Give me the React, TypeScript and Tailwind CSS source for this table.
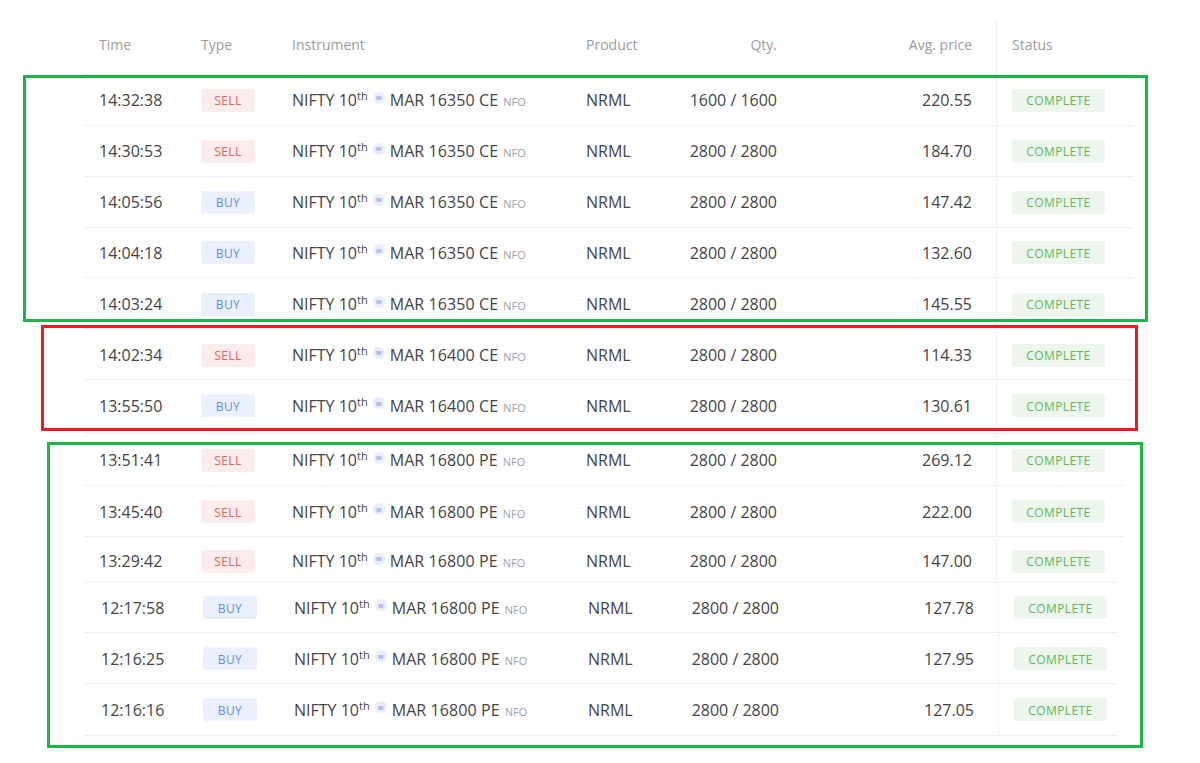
import React from "react";

type Side = "SELL" | "BUY";

interface Order {
  time: string;
  side: Side;
  strike: string;
  qty: string;
  price: string;
  h: string;
  shift?: boolean;
  pad?: string;
  line: string;
}

const orders: Order[] = [
  { time: "14:32:38", side: "SELL", strike: "16350 CE", qty: "1600 / 1600", price: "220.55", h: "h-[51px]", line: "w-[1049px]" },
  { time: "14:30:53", side: "SELL", strike: "16350 CE", qty: "2800 / 2800", price: "184.70", h: "h-[51px]", line: "w-[1049px]" },
  { time: "14:05:56", side: "BUY", strike: "16350 CE", qty: "2800 / 2800", price: "147.42", h: "h-[51px]", line: "w-[1049px]" },
  { time: "14:04:18", side: "BUY", strike: "16350 CE", qty: "2800 / 2800", price: "132.60", h: "h-[50px]", line: "w-[1049px]" },
  { time: "14:03:24", side: "BUY", strike: "16350 CE", qty: "2800 / 2800", price: "145.55", h: "h-[51px]", pad: "pt-[2px]", line: "w-[1049px]" },
  { time: "14:02:34", side: "SELL", strike: "16400 CE", qty: "2800 / 2800", price: "114.33", h: "h-[51px]", pad: "pt-[2px]", line: "w-[1049px]" },
  { time: "13:55:50", side: "BUY", strike: "16400 CE", qty: "2800 / 2800", price: "130.61", h: "h-[54px]", pad: "pb-[2px]", line: "w-[1040px]" },
  { time: "13:51:41", side: "SELL", strike: "16800 PE", qty: "2800 / 2800", price: "269.12", h: "h-[52px]", pad: "pt-[1px]", line: "w-[1040px]" },
  { time: "13:45:40", side: "SELL", strike: "16800 PE", qty: "2800 / 2800", price: "222.00", h: "h-[51px]", pad: "pt-[1px]", line: "w-[1040px]" },
  { time: "13:29:42", side: "SELL", strike: "16800 PE", qty: "2800 / 2800", price: "147.00", h: "h-[46px]", pad: "pt-[3px]", line: "w-[1033px]" },
  { time: "12:17:58", side: "BUY", strike: "16800 PE", qty: "2800 / 2800", price: "127.78", h: "h-[50px]", shift: true, line: "w-[1033px]" },
  { time: "12:16:25", side: "BUY", strike: "16800 PE", qty: "2800 / 2800", price: "127.95", h: "h-[51px]", pad: "pt-[1px]", shift: true, line: "w-[1033px]" },
  { time: "12:16:16", side: "BUY", strike: "16800 PE", qty: "2800 / 2800", price: "127.05", h: "h-[52px]", shift: true, line: "w-[1033px]" },
];

function SideBadge({ side }: { side: Side }) {
  const tone =
    side === "SELL"
      ? "bg-[#fdecec] text-[#e4605d]"
      : "bg-[#eaf0fe] text-[#5b8def]";
  return (
    <span
      className={`flex h-[23px] w-[54px] items-center justify-center rounded-[3px] pt-[2px] text-[12px] tracking-[0.4px] ${tone}`}
    >
      {side}
    </span>
  );
}

function Instrument({ strike }: { strike: string }) {
  return (
    <span className="flex items-baseline whitespace-nowrap">
      <span>NIFTY 10</span>
      <sup className="relative -top-[6px] text-[11px] leading-none">th</sup>
      <span className="mx-[5px] flex h-[12px] w-[12px] -translate-y-[6px] items-center justify-center rounded-full bg-[#e8edfb] text-[7px] leading-none text-[#6b8fe6]">
        w
      </span>
      <span className="tracking-[0.1px]">MAR {strike}</span>
      <span className="ml-[5px] text-[11px] text-[#a0a0a0]">NFO</span>
    </span>
  );
}

function Row({ o }: { o: Order }) {
  return (
    <div className={`flex flex-col ${o.h}`}>
      <div
        className={`flex flex-1 items-center ${o.shift ? "pl-[2px]" : ""} ${o.pad ?? ""}`}
      >
        <div className="w-[102px] pl-[15px]">{o.time}</div>
        <div className="w-[91px] pl-[15px]">
          <SideBadge side={o.side} />
        </div>
        <div className="w-[294px] pl-[15px]">
          <Instrument strike={o.strike} />
        </div>
        <div className="w-[102px] pl-[15px]">NRML</div>
        <div className="w-[119px] pr-[15px] text-right">{o.qty}</div>
        <div className="w-[204px] pr-[24px] text-right">{o.price}</div>
        <div className="flex h-full w-[137px] items-center border-l border-[#f0f0f0] pl-[15px]">
          <span className="flex h-[23px] w-[93px] items-center justify-center rounded-[3px] bg-[#ecf6ec] pt-[2px] text-[12px] tracking-[0.4px] text-[#5cb85c]">
            COMPLETE
          </span>
        </div>
      </div>
      <div className={`h-px bg-[#eeeeee] ${o.line}`} />
    </div>
  );
}

export default function App() {
  return (
    <div className="relative h-[763px] w-[1200px] overflow-hidden bg-white font-['Open_Sans',sans-serif] text-[16px] text-[#444444]">
      <div className="ml-[84px] pt-[20px]">
        <div className="flex h-[55px] w-[1049px] items-center border-b border-[#eeeeee] text-[14px] text-[#9b9b9b]">
          <div className="flex h-full w-[912px] items-center pb-[6px]">
            <div className="w-[102px] pl-[15px]">Time</div>
            <div className="w-[91px] pl-[15px]">Type</div>
            <div className="w-[294px] pl-[15px]">Instrument</div>
            <div className="w-[102px] pl-[15px]">Product</div>
            <div className="w-[119px] pr-[15px] text-right">Qty.</div>
            <div className="w-[204px] pr-[24px] text-right">Avg. price</div>
          </div>
          <div className="flex h-full w-[137px] items-center border-l border-[#f0f0f0] pb-[6px] pl-[15px]">
            Status
          </div>
        </div>
        {orders.map((o) => (
          <Row key={o.time} o={o} />
        ))}
      </div>

      {/* annotation boxes drawn over the screenshot */}
      <div className="absolute left-[23px] top-[75px] h-[247px] w-[1125px] border-[3px] border-[#1db345]" />
      <div className="absolute left-[41px] top-[325px] h-[106px] w-[1097px] border-[3px] border-[#ed1c24]" />
      <div className="absolute left-[47px] top-[442px] h-[306px] w-[1096px] border-[3px] border-[#1db345]" />
    </div>
  );
}
